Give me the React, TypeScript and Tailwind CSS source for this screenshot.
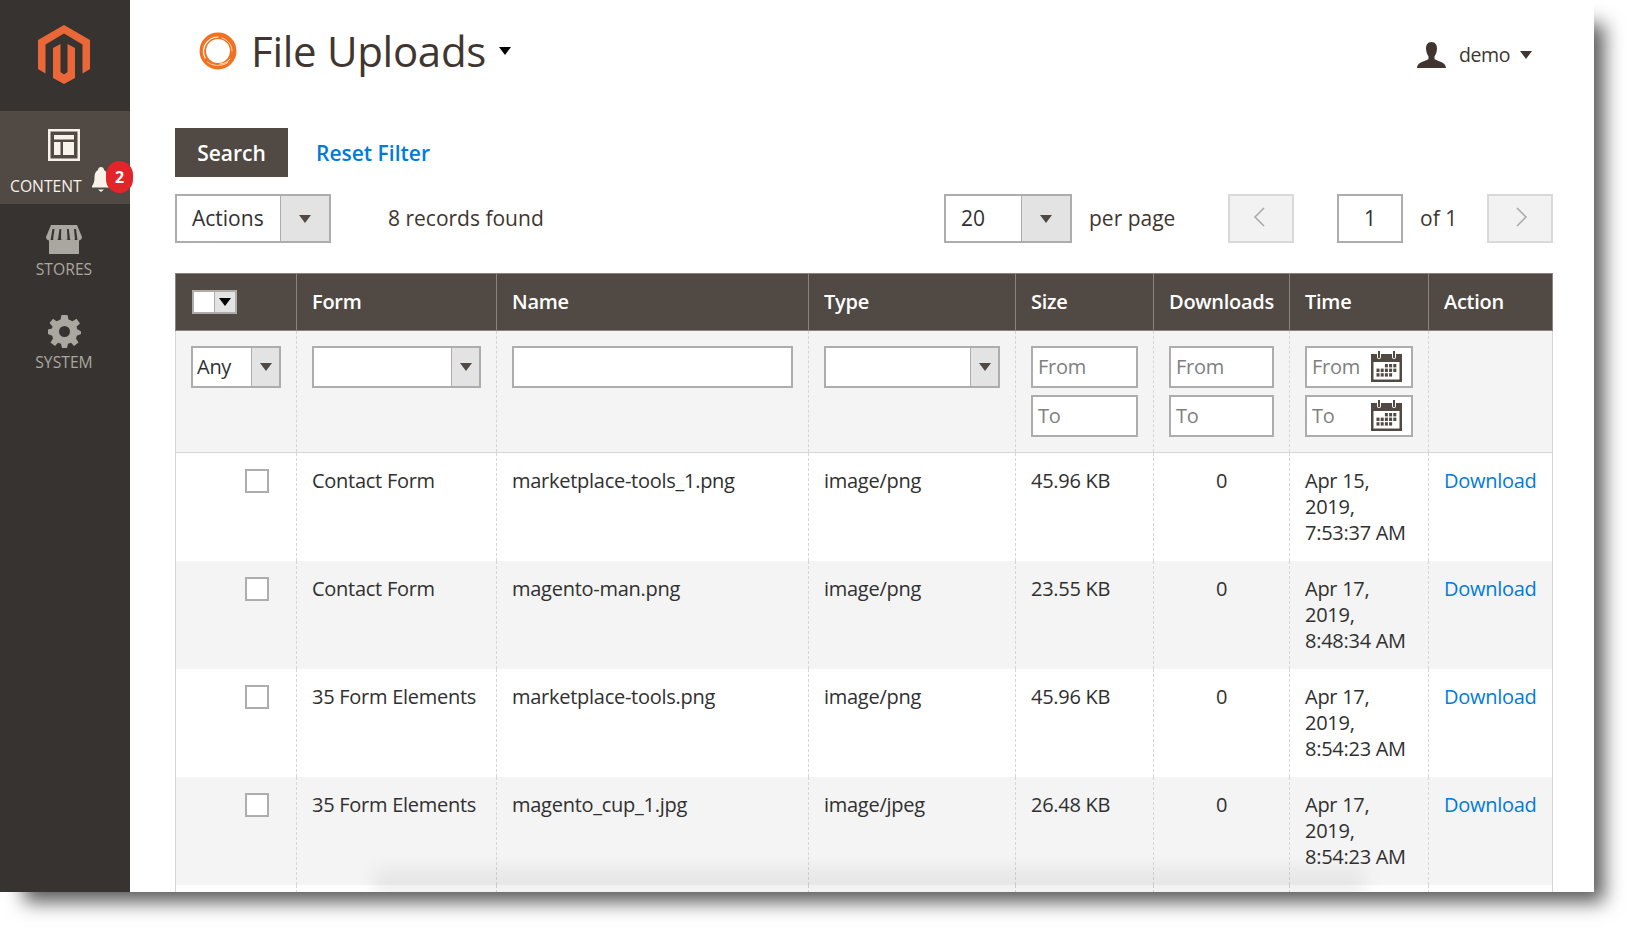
const borderInput = "border-2 border-[#adadad] bg-white";

const Arrow = ({ className = "border-t-[#514943]" }: { className?: string }) => (
  <span className={`h-0 w-0 border-x-[6px] border-t-[8px] border-x-transparent ${className}`} />
);

const Select = ({ value, width, arrowWidth, height, pad = "pl-[14px]" }: {
  value: string;
  width: string;
  arrowWidth: string;
  height: string;
  pad?: string;
}) => (
  <div className={`flex ${width} ${height} ${borderInput} text-[#303030]`}>
    <div className={`flex flex-1 items-center ${pad}`}>{value}</div>
    <div className={`flex ${arrowWidth} items-center justify-center border-l border-[#adadad] bg-[#e3e3e3]`}>
      <Arrow />
    </div>
  </div>
);

const TextBox = ({ text, width, calendar = false }: { text: string; width: string; calendar?: boolean }) => (
  <div className={`flex h-[42px] ${width} items-center justify-between ${borderInput} pl-[5px] pr-[9px] text-[#808080]`}>
    <span>{text}</span>
    {calendar && <CalendarIcon />}
  </div>
);

const CalendarIcon = () => (
  <svg className="mb-[1px]" width="31" height="31" viewBox="0 0 31 31">
    <rect x="0" y="3" width="31" height="28" fill="#514943" />
    <rect x="2.5" y="11" width="26" height="17.5" fill="#fff" />
    <rect x="6" y="0" width="4" height="8" rx="2" fill="#fff" />
    <rect x="7" y="0" width="2" height="7" fill="#514943" />
    <rect x="21" y="0" width="4" height="8" rx="2" fill="#fff" />
    <rect x="22" y="0" width="2" height="7" fill="#514943" />
    {[0, 1, 2].map((r) =>
      [0, 1, 2, 3, 4].map((c) =>
        r < 1 && c < 2 ? null : r === 2 && c > 3 ? null : (
          <rect key={`${r}-${c}`} x={5.5 + c * 4.2} y={13 + r * 4.6} width="3" height="3.4" fill="#514943" />
        )
      )
    )}
  </svg>
);

const MagentoLogo = () => (
  <svg width="52" height="60" viewBox="38 25 52 60" fill="#ec6737">
    <path d="M64 25 90 40 90 69 82.5 73.5 82.5 44.5 64 33.5 45.5 44.5 45.5 73.5 38 69 38 40Z" />
    <path d="M60.5 44 60.5 72 64 74.5 67.5 72 67.5 44 75 48 75 78 64 84 53 78 53 48Z" />
  </svg>
);

const SwirlIcon = () => (
  <svg width="38" height="38" viewBox="0 0 38 38" fill="none" strokeLinecap="round">
    <circle cx="19" cy="19" r="15.200" stroke="#f2711f" strokeWidth="6.500" />
    <path d="M6 26C1.500 16 8 5.500 19 5" stroke="#fff" strokeWidth="1.200" />
    <path d="M8.500 30C13 34 22 35 29 30.500" stroke="#fdd3b5" strokeWidth="1" />
    <path d="M23 6C29 8 33 13 33 19" stroke="#fdd3b5" strokeWidth="1" />
    <path d="M31 27C29 30 25 32 21 32" stroke="#fff" strokeWidth="0.800" />
  </svg>
);

const ContentIcon = () => (
  <svg width="32" height="32" viewBox="0 0 32 32" fill="#f7f3eb">
    <path fillRule="evenodd" d="M0 0H32V32H0ZM2.5 2.5V29.5H29.5V2.5Z" />
    <rect x="6" y="6" width="20" height="4.5" />
    <rect x="6" y="13" width="6.5" height="13" />
    <rect x="15" y="13" width="11" height="13" />
  </svg>
);

const StoresIcon = () => (
  <svg width="36" height="29" viewBox="0 0 36 29" fill="#aaa6a0">
    <rect x="3" y="15" width="30" height="14" />
    <path d="M5 0H31L36 12C36 15 33 15.500 31.500 15.500L30 4H28L29 14.500C27 15.500 25.500 15.500 24 14.500L22.800 4H21L21.500 14.500C19.500 15.500 17.500 15.500 15 14.500L15.200 4H13.500L12 14.500C10.500 15.500 8.500 15.500 7 14.500L8.500 4H6.500L4.500 15.500C3 15.500 0 15 0 12Z" />
  </svg>
);

const GearIcon = () => (
  <svg width="33" height="33" viewBox="0 0 33 33" fill="#aaa6a0">
    <path
      fillRule="evenodd"
      d="M13.500 0H19.500L20.500 4.500L24.500 6.200L28.500 3.800L32 8.500L28.600 11.600L29 14L33 16.500L33 19L28.800 20.800L28 23.500L30.500 27.500L26 31L23 27.700L20 28.800L19 33H14L13 28.800L10 27.700L7 31L2.500 27.500L5 23.500L4.200 20.800L0 19V14.500L4 13.500L4.500 11.600L1.500 8L5 3.800L8.500 6.200L12.500 4.500ZM16.500 11A5.500 5.500 0 1 0 16.500 22A5.500 5.500 0 1 0 16.500 11Z"
    />
  </svg>
);

const NavItem = ({ icon, label, top, gap }: { icon: React.ReactNode; label: string; top: string; gap: string }) => (
  <div className={`flex h-[89px] flex-col items-center pr-[2px] ${top} text-[15.700px] leading-[20px] text-[#aaa6a0]`}>
    {icon}
    <span className={gap}>{label}</span>
  </div>
);

const rows = [
  { bg: "bg-white", cells: ["Contact Form", "marketplace-tools_1.png", "image/png", "45.96 KB", "Apr 15,", "7:53:37 AM"] },
  { bg: "bg-[#f4f4f4]", cells: ["Contact Form", "magento-man.png", "image/png", "23.55 KB", "Apr 17,", "8:48:34 AM"] },
  { bg: "bg-white", cells: ["35 Form Elements", "marketplace-tools.png", "image/png", "45.96 KB", "Apr 17,", "8:54:23 AM"] },
  { bg: "bg-[#f4f4f4]", cells: ["35 Form Elements", "magento_cup_1.jpg", "image/jpeg", "26.48 KB", "Apr 17,", "8:54:23 AM"] },
];

const headers = ["Form", "Name", "Type", "Size", "Downloads", "Time", "Action"];
const colWidths = ["w-[121px]", "w-[200px]", "w-[312px]", "w-[207px]", "w-[138px]", "w-[136px]", "w-[139px]", "w-[124px]"];
const dashed = "border-x border-dashed border-[#d6d6d6] align-top first:[border-left-style:solid] last:[border-right-style:solid]";

export default function App() {
  return (
    <div className="h-[933px] overflow-hidden bg-white font-['Open_Sans',sans-serif]">
      <div className="relative h-[892px] w-[1594px] bg-white shadow-[17px_17px_18px_-7px_rgba(0,0,0,0.65)]">
        <div className="flex h-full overflow-hidden">
          {/* sidebar */}
          <aside className="w-[130px] shrink-0 bg-[#373330]">
            <div className="flex h-[111px] justify-center pr-[2px] pt-[25px]">
              <MagentoLogo />
            </div>
            <div className="flex h-[93px] flex-col items-center bg-[#514943] pr-[2px] pt-[18px]">
              <ContentIcon />
              <div className="mt-[15px] w-full pl-[10px] text-[15.700px] leading-[20px] text-[#f7f3eb]">CONTENT</div>
            </div>
            <NavItem icon={<StoresIcon />} label="STORES" top="pt-[21px]" gap="mt-[5px]" />
            <NavItem icon={<GearIcon />} label="SYSTEM" top="pt-[22px]" gap="mt-[4px]" />
          </aside>

          {/* main */}
          <main className="min-w-0 flex-1 pl-[45px] pr-[41px]">
            <header className="flex h-[128px] items-start justify-between">
              <div className="flex items-center pl-[24px] pt-[21px]">
                <SwirlIcon />
                <h1 className="ml-[14px] text-[42px] leading-[60px] tracking-[-0.3px] text-[#41362f]">File Uploads</h1>
                <span className="ml-[13px] h-0 w-0 border-x-[6px] border-t-[8px] border-x-transparent border-t-black" />
              </div>
              <div className="flex items-center pr-[21px] pt-[41px] text-[19.500px] leading-[26px] tracking-[-0.4px] text-[#41362f]">
                <svg width="29" height="26" viewBox="0 0 29 26" fill="#41362f">
                  <path d="M14.500 0C18.500 0 20 3 20 6.500C20 10 18.500 13 17.500 14.500V17C20 19 29 20 29 26H0C0 20 9 19 11.500 17V14.500C10.500 13 9 10 9 6.500C9 3 10.500 0 14.500 0Z" />
                </svg>
                <span className="ml-[13px] mt-[1px]">demo</span>
                <span className="ml-[10px] h-0 w-0 border-x-[6px] border-t-[8px] border-x-transparent border-t-[#41362f]" />
              </div>
            </header>

            <div className="flex h-[49px] items-center text-[21px] font-semibold">
              <button className="flex h-[49px] w-[113px] items-center justify-center bg-[#514943] pt-[3px] text-white">Search</button>
              <a className="ml-[28px] pt-[3px] text-[#007bdb]">Reset Filter</a>
            </div>

            <div className="mt-[17px] flex h-[49px] items-center text-[21px] text-[#41362f]">
              <Select value="Actions" width="w-[156px]" arrowWidth="w-[49px]" height="h-[49px]" pad="pl-[15px]" />
              <span className="ml-[57px]">8 records found</span>
              <div className="ml-auto flex items-center">
                <Select value="20" width="w-[128px]" arrowWidth="w-[49px]" height="h-[49px]" pad="pl-[15px]" />
                <span className="ml-[17px] w-[139px]">per page</span>
                <div className="flex h-[49px] w-[66px] items-center justify-center border-2 border-[#d9d9d9] bg-[#f2f2f2]">
                  <svg className="mb-[3px] mr-[5px]" width="12" height="20" viewBox="0 0 12 20" fill="none" stroke="#a7a7a7" strokeWidth="1.500"><path d="M11 1 2 10 11 19" /></svg>
                </div>
                <div className="ml-[43px] flex h-[49px] w-[66px] items-center justify-center border-2 border-[#adadad] bg-white text-[#303030]">1</div>
                <span className="ml-[17px] w-[67px]">of 1</span>
                <div className="flex h-[49px] w-[66px] items-center justify-center border-2 border-[#d9d9d9] bg-[#f2f2f2]">
                  <svg className="mb-[3px] ml-[4px]" width="12" height="20" viewBox="0 0 12 20" fill="none" stroke="#a7a7a7" strokeWidth="1.500"><path d="M1 1 10 10 1 19" /></svg>
                </div>
              </div>
            </div>

            <table className="mt-[30px] w-[1377px] table-fixed border-collapse text-[20px] leading-[26px] tracking-[-0.27px] text-[#303030]">
              <colgroup>
                {colWidths.map((w, i) => <col key={i} className={w} />)}
              </colgroup>
              <thead>
                <tr className="h-[57px] bg-[#514943] text-left text-white">
                  <th className="border border-[#8a837f] pl-[16px] font-normal">
                    <div className="flex h-[24px] w-[45px] border-2 border-[#adadad] bg-white">
                      <div className="flex-1" />
                      <div className="flex w-[21px] items-center justify-center border-l border-[#adadad] bg-[#e3e3e3]">
                        <Arrow className="border-t-black" />
                      </div>
                    </div>
                  </th>
                  {headers.map((h) => (
                    <th key={h} className="border border-[#8a837f] px-[15px] font-semibold">{h}</th>
                  ))}
                </tr>
              </thead>
              <tbody>
                <tr className="h-[122px] border-b border-[#d6d6d6] bg-[#f4f4f4]">
                  <td className={`${dashed} pl-[15px] pt-[15px]`}>
                    <Select value="Any" width="w-[90px]" arrowWidth="w-[28px]" height="h-[42px]" pad="pl-[4px]" />
                  </td>
                  <td className={`${dashed} pl-[15px] pt-[15px]`}>
                    <Select value="" width="w-[169px]" arrowWidth="w-[28px]" height="h-[42px]" />
                  </td>
                  <td className={`${dashed} pl-[15px] pt-[15px]`}>
                    <div className={`h-[42px] w-[281px] ${borderInput}`} />
                  </td>
                  <td className={`${dashed} pl-[15px] pt-[15px]`}>
                    <Select value="" width="w-[176px]" arrowWidth="w-[28px]" height="h-[42px]" />
                  </td>
                  <td className={`${dashed} pl-[15px] pt-[15px]`}>
                    <div className="flex flex-col gap-[7px]">
                      <TextBox text="From" width="w-[107px]" />
                      <TextBox text="To" width="w-[107px]" />
                    </div>
                  </td>
                  <td className={`${dashed} pl-[15px] pt-[15px]`}>
                    <div className="flex flex-col gap-[7px]">
                      <TextBox text="From" width="w-[105px]" />
                      <TextBox text="To" width="w-[105px]" />
                    </div>
                  </td>
                  <td className={`${dashed} pl-[15px] pt-[15px]`}>
                    <div className="flex flex-col gap-[7px]">
                      <TextBox text="From" width="w-[108px]" calendar />
                      <TextBox text="To" width="w-[108px]" calendar />
                    </div>
                  </td>
                  <td className={dashed} />
                </tr>
                {rows.map((r, i) => (
                  <tr key={i} className={`h-[108px] ${r.bg}`}>
                    <td className={`${dashed} pt-[16px]`}>
                      <div className="ml-[69px] h-[24px] w-[24px] border-2 border-[#adadad] bg-white" />
                    </td>
                    <td className={`${dashed} px-[15px] pt-[15px]`}>{r.cells[0]}</td>
                    <td className={`${dashed} px-[15px] pt-[15px]`}>{r.cells[1]}</td>
                    <td className={`${dashed} px-[15px] pt-[15px]`}>{r.cells[2]}</td>
                    <td className={`${dashed} px-[15px] pt-[15px]`}>{r.cells[3]}</td>
                    <td className={`${dashed} px-[15px] pt-[15px] text-center`}>0</td>
                    <td className={`${dashed} px-[15px] pt-[15px]`}>
                      {r.cells[4]}<br />2019,<br />{r.cells[5]}
                    </td>
                    <td className={`${dashed} px-[15px] pt-[15px] text-[#007bdb]`}>Download</td>
                  </tr>
                ))}
                <tr className="h-[40px] bg-white">
                  {colWidths.map((_, i) => <td key={i} className={dashed} />)}
                </tr>
              </tbody>
            </table>
          </main>
        </div>

        {/* bell hangs over the sidebar edge */}
        <div className="absolute left-[92px] top-[167px]">
          <svg width="18" height="25" viewBox="0 0 18 25" fill="#f7f3eb">
            <path d="M9 0C11 0 12 1.500 12 3C15 4.500 15.500 8 15.500 11C15.500 15 16.500 17 18 19V20.500H0V19C1.500 17 2.500 15 2.500 11C2.500 8 3 4.500 6 3C6 1.500 7 0 9 0Z" />
            <path d="M6 22.500H12L9 25Z" />
          </svg>
        </div>
        <div className="absolute left-[106px] top-[161px] flex h-[32px] w-[27px] items-center justify-center rounded-full bg-[#e22529] text-[16px] font-bold text-white">2</div>

        {/* soft shadow at the lower edge */}
        <div className="pointer-events-none absolute inset-x-0 bottom-0 h-[40px] overflow-hidden">
          <div className="absolute bottom-[-10px] left-[375px] right-[230px] h-[34px] bg-black/[0.05] blur-[8px]" />
        </div>
      </div>
    </div>
  );
}
